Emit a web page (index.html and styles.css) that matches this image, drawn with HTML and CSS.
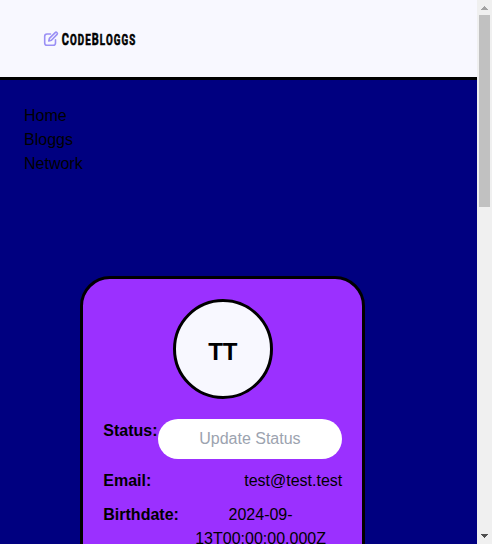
FILE: index.html
```html
<!DOCTYPE html>
<html lang="en">
<head>
<meta charset="utf-8">
<title>CodeBloggs</title>
<link rel="stylesheet" href="styles.css">
</head>
<body>
<div class="page">
  <header class="header">
    <svg class="logo" width="98" height="20" viewBox="0 0 98 20" role="img" aria-label="CodeBloggs">
      <g fill="none" stroke="#9a8ff5" stroke-width="1.6" stroke-linecap="round" stroke-linejoin="round">
        <path d="M7.5 4H4Q1.7 4 1.7 6.3V13Q1.7 15.3 4 15.3H10.2Q12.5 15.3 12.5 13V9.8"/>
        <path d="M5.8 11L6.4 8.4L12.2 2.6Q13 1.8 13.9 2.6Q14.9 3.5 14.1 4.4L8.4 10.3Z"/>
      </g>
      <text class="wordmark" y="14.5" x="18.7" textLength="74.6" lengthAdjust="spacingAndGlyphs"><tspan class="cap">C</tspan>ODE<tspan class="cap">B</tspan>LOGGS</text>
    </svg>
  </header>
  <nav class="nav">
    <a>Home</a>
    <a>Bloggs</a>
    <a>Network</a>
  </nav>
  <main class="card">
    <div class="avatar">TT</div>
    <div class="row"><strong>Status:</strong><input class="status" type="text" placeholder="Update Status"></div>
    <div class="row"><strong>Email:</strong><span>test@test.test</span></div>
    <div class="row"><strong>Birthdate:</strong><span class="value">2024-09-13T00:00:00.000Z</span></div>
  </main>
</div>
<div class="scrollbar">
  <svg width="15" height="15"><path d="M4 10V9H5V8H6V7H7V6H8V7H9V8H10V9H11V10Z" fill="#a3a3a3"/></svg>
  <div class="thumb"></div>
  <svg class="down" width="15" height="15"><path d="M4 5V6H5V7H6V8H7V9H8V8H9V7H10V6H11V5Z" fill="#505050"/></svg>
</div>
</body>
</html>
```

FILE: styles.css
```css
* { box-sizing: border-box; }
body {
  margin: 0;
  display: flex;
  height: 100vh;
  overflow: hidden;
  background: navy;
  color: #000;
  font: 16px/24px "Liberation Sans", Arial, sans-serif;
}
.page { flex: 1; min-width: 0; }
.header {
  height: 80px;
  padding: 30px 43px;
  background: ghostwhite;
  border-bottom: 3px solid #000;
}
.logo { display: block; }
.wordmark {
  font: bold 14.3px Roboto, sans-serif;
  letter-spacing: 1.6px;
  stroke: #000;
  stroke-width: .6px;
}
.cap { font-size: 16px; }
.nav {
  display: flex;
  flex-direction: column;
  padding: 24px;
}
.card {
  width: 285px;
  margin: 76px 0 0 80.3px;
  padding: 20px;
  background: #9b30ff;
  border: 3px solid #000;
  border-radius: 30px;
}
.avatar {
  display: flex;
  align-items: center;
  justify-content: center;
  width: 100px;
  height: 100px;
  margin: 0 auto 20px;
  padding-top: 6px;
  background: ghostwhite;
  border: 3px solid #000;
  border-radius: 50%;
  font-size: 24px;
  font-weight: bold;
}
.row {
  display: flex;
  justify-content: space-between;
  margin-bottom: 10px;
}
.status {
  flex: 1;
  min-width: 0;
  height: 40px;
  padding: 8px;
  border: 0;
  border-radius: 20px;
  background: #fff;
  font: inherit;
  text-align: center;
}
.status::placeholder { color: #9ca3af; }
.value {
  flex: 1;
  min-width: 0;
  text-align: center;
}
.scrollbar {
  display: flex;
  flex-direction: column;
  width: 15px;
  background: #f0f0f0;
}
.scrollbar svg { display: block; }
.thumb {
  width: 11px;
  height: 192px;
  margin-left: 2px;
  background: #c1c1c1;
}
.down { margin-top: auto; }
```
